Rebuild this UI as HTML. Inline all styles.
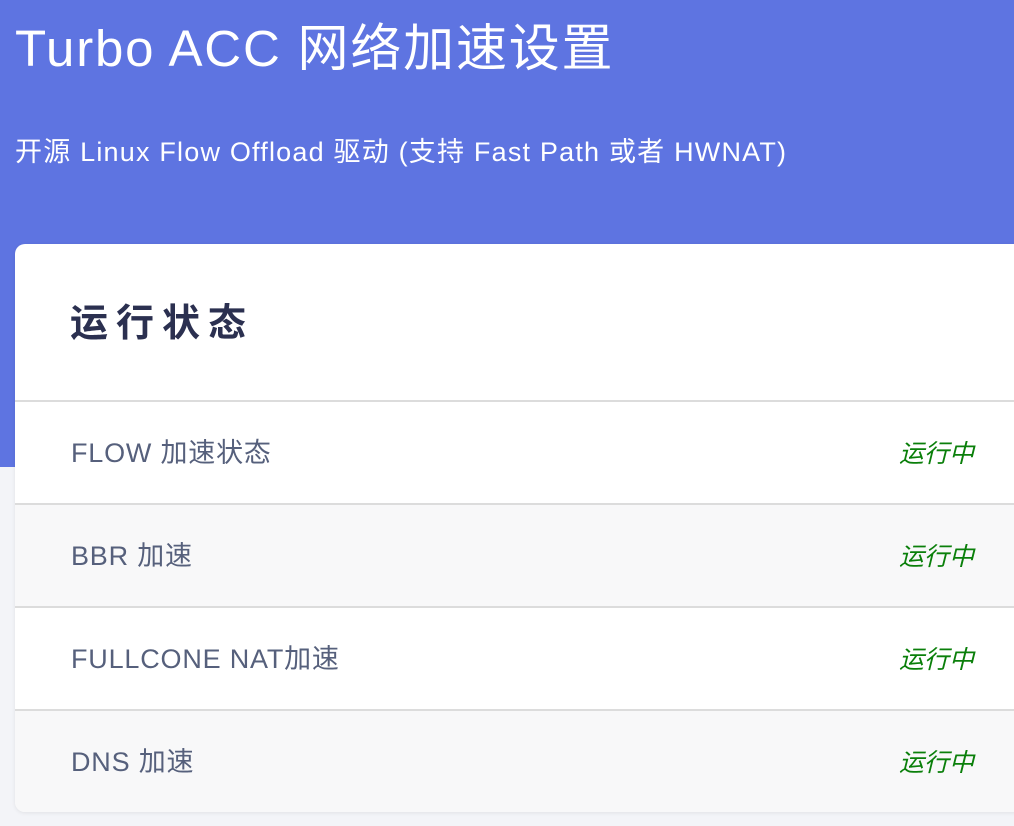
<!DOCTYPE html>
<html><head><meta charset="utf-8"><style>
html,body{margin:0;padding:0;width:1014px;height:826px;overflow:hidden;background:#f3f4f8;font-family:"Liberation Sans","Noto Sans CJK SC",sans-serif;}
.hdr{position:absolute;left:0;top:0;width:1014px;height:467px;background:#5e74e1;}
.h1{position:absolute;left:15px;top:14px;color:#fff;font-size:51px;line-height:70px;white-space:nowrap;letter-spacing:1.8px;}
.h2{position:absolute;left:15px;top:132px;color:#fff;font-size:27px;line-height:40px;white-space:nowrap;letter-spacing:1.2px;}
.card{position:absolute;left:15px;top:244px;width:1010px;height:568px;background:#fff;border-radius:10px 0 0 10px;box-shadow:0 1px 4px rgba(0,0,0,.08);overflow:hidden;}
.title{position:absolute;left:55px;top:52px;font-size:38px;font-weight:bold;color:#2b3050;letter-spacing:8px;line-height:56px;}
.row{position:absolute;left:0;width:1010px;height:102px;border-top:2px solid #dcdcdc;}
.row .l{position:absolute;left:56px;top:32px;font-size:27px;color:#56607c;line-height:38px;white-space:nowrap;letter-spacing:0.8px;}
.row .r{position:absolute;left:884px;top:34px;font-size:25px;color:#0a7f0a;font-style:italic;line-height:36px;}
.alt{background:#f8f8f9;}
</style></head><body>
<div class="hdr"></div>
<div class="h1">Turbo ACC 网络加速设置</div>
<div class="h2">开源 Linux Flow Offload 驱动 (支持 Fast Path 或者 HWNAT)</div>
<div class="card">
<div class="title">运行状态</div>
<div class="row" style="top:156px"><div class="l">FLOW 加速状态</div><div class="r">运行中</div></div>
<div class="row alt" style="top:259px"><div class="l">BBR 加速</div><div class="r">运行中</div></div>
<div class="row" style="top:362px"><div class="l">FULLCONE NAT加速</div><div class="r">运行中</div></div>
<div class="row alt" style="top:465px"><div class="l">DNS 加速</div><div class="r">运行中</div></div>
</div>
</body></html>
